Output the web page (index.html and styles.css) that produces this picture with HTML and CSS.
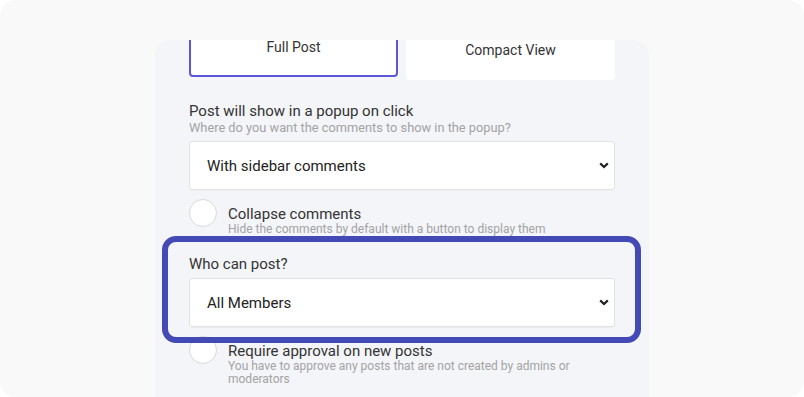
FILE: index.html
```html
<!DOCTYPE html>
<html lang="en">
<head>
    <meta charset="UTF-8">
    <meta name="viewport" content="width=device-width, initial-scale=1.0">
    <title>Post Settings</title>
    <link rel="stylesheet" href="styles.css">
</head>
<body>

<div class="frame">
    <div class="panel">
        <div class="view-options">
            <button type="button" class="view-option selected">Full Post</button>
            <button type="button" class="view-option">Compact View</button>
        </div>

        <div class="field">
            <label for="popupMode" class="field-title">Post will show in a popup on click</label>
            <div class="field-hint">Where do you want the comments to show in the popup?</div>
            <div class="select-wrap">
                <select id="popupMode" class="select">
                    <option>With sidebar comments</option>
                    <option>With comments below</option>
                </select>
                <svg class="chevron" width="10" height="7" viewBox="0 0 10 7"><path d="M1.2 1.4 L5 5 L8.8 1.4" fill="none" stroke="#222" stroke-width="2.2"/></svg>
            </div>
        </div>

        <div class="toggle-row">
            <span class="toggle"></span>
            <div class="toggle-text">
                <div class="toggle-title">Collapse comments</div>
                <div class="toggle-hint">Hide the comments by default with a button to display them</div>
            </div>
        </div>

        <div class="field highlighted">
            <label for="whoCanPost" class="field-title">Who can post?</label>
            <div class="select-wrap">
                <select id="whoCanPost" class="select">
                    <option>All Members</option>
                    <option>Admins only</option>
                </select>
                <svg class="chevron" width="10" height="7" viewBox="0 0 10 7"><path d="M1.2 1.4 L5 5 L8.8 1.4" fill="none" stroke="#222" stroke-width="2.2"/></svg>
            </div>
        </div>

        <div class="toggle-row">
            <span class="toggle"></span>
            <div class="toggle-text">
                <div class="toggle-title">Require approval on new posts</div>
                <div class="toggle-hint">You have to approve any posts that are not created by admins or moderators</div>
            </div>
        </div>
    </div>
</div>

</body>
</html>
```

FILE: styles.css
```css
body {
    margin: 0;
    background: #ffffff;
    font-family: Roboto, "Liberation Sans", sans-serif;
    color: #333333;
}
.frame {
    height: 397px;
    background: #f9f9f9;
    border-radius: 16px;
    overflow: hidden;
    padding-top: 40px;
    box-sizing: border-box;
    display: flex;
    justify-content: center;
}
.panel {
    width: 494px;
    padding: 0 34px;
    box-sizing: border-box;
    background: #f4f5f9;
    border-radius: 16px 16px 0 0;
    overflow: hidden;
}
.view-options {
    display: grid;
    grid-template-columns: 1fr 1fr;
    gap: 8px;
    margin-top: -20px;
}
.view-option {
    height: 60px;
    border: 2px solid transparent;
    border-radius: 4px;
    background: #ffffff;
    font-family: inherit;
    font-size: 14px;
    color: #333333;
    padding: 0;
}
.view-option.selected {
    border-color: #5c56d8;
    transform: translateY(-3px);
}
.field {
    margin-top: 22px;
}
.field-title {
    display: block;
    font-size: 15px;
    line-height: 18px;
    color: #333333;
}
.field-hint {
    font-size: 12.8px;
    line-height: 16px;
    color: #a3a3a3;
}
.select-wrap {
    position: relative;
    margin-top: 5px;
}
.select {
    display: block;
    width: 100%;
    height: 49px;
    padding: 0 30px 0 17px;
    border: 1px solid #e2e2e2;
    border-radius: 3px;
    background: #ffffff;
    font-family: inherit;
    font-size: 15px;
    color: #222222;
    appearance: none;
    -webkit-appearance: none;
    box-shadow: 0 1px 1px rgba(0, 0, 0, 0.03);
}
.chevron {
    position: absolute;
    right: 6px;
    top: 21px;
    pointer-events: none;
}
.toggle-row {
    display: flex;
    gap: 11px;
    margin-top: 9px;
}
.toggle {
    flex: none;
    width: 28px;
    height: 28px;
    box-sizing: border-box;
    border: 1px solid #d9d9d9;
    border-radius: 50%;
    background: #ffffff;
}
.toggle-title {
    margin-top: 6px;
    font-size: 15px;
    line-height: 18px;
    color: #333333;
}
.toggle-hint {
    font-size: 12px;
    line-height: 13px;
    color: #a3a3a3;
}
.highlighted {
    position: relative;
    margin-top: 19px;
}
.highlighted::after {
    content: "";
    position: absolute;
    top: -19px;
    bottom: -16px;
    left: -27px;
    right: -26px;
    border: 6px solid #4349b5;
    border-radius: 14px;
    z-index: 2;
    pointer-events: none;
}
```
